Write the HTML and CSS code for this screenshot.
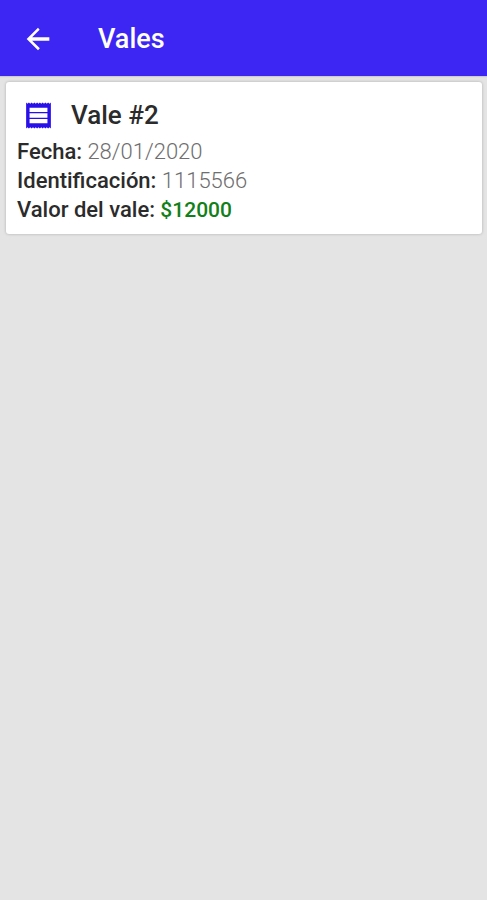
FILE: index.html
```
<!DOCTYPE html>
<html lang="es">
<head>
  <meta charset="UTF-8">
  <meta name="viewport" content="width=device-width, initial-scale=1">
  <title>Vales</title>
  <link rel="stylesheet" href="styles.css">
</head>
<body>
  <header class="toolbar">
    <button type="button" class="back" aria-label="Volver">
      <svg viewBox="0 0 24 24"><path d="M20 10.800H7.830l5.300-5.300L12 4l-8 8 8 8 1.300-1.500L7.830 13.200H20z"/></svg>
    </button>
    <h1>Vales</h1>
  </header>

  <main class="list">
    <article class="card">
      <div class="card-title">
        <svg class="receipt" viewBox="0 0 24 24"><path d="M18.500 17.700h-13v-3.200h13zm0-4.100h-13v-3.200h13zm0-4.100h-13V6.300h13zM3 21.500l1-1 1 1 1-1 1 1 1-1 1 1 1-1 1 1 1-1 1 1 1-1 1 1 1-1 1 1 1-1 1 1 1-1 1 1V2.500l-1 1-1-1-1 1-1-1-1 1-1-1-1 1-1-1-1 1-1-1-1 1-1-1-1 1-1-1-1 1-1-1-1 1-1-1z"/></svg>
        <h2>Vale #2</h2>
      </div>
      <p><strong>Fecha:</strong> 28/01/2020</p>
      <p><strong>Identificación:</strong> 1115566</p>
      <p><strong>Valor del vale:</strong> <span class="amount">$12000</span></p>
    </article>
  </main>
</body>
</html>
```
FILE: styles.css
```
body {
  margin: 0;
  min-height: 100vh;
  background: #e4e4e4;
  font-family: Roboto, sans-serif;
}

.toolbar {
  display: flex;
  align-items: center;
  box-sizing: border-box;
  height: 76px;
  padding: 2px 21px 0;
  background: #3d26f3;
  color: #fff;
  box-shadow: 0 1px 1px rgba(0, 0, 0, 0.1);
}

.back {
  display: flex;
  padding: 0;
  border: none;
  background: none;
  cursor: pointer;
}

.back svg {
  width: 34px;
  height: 34px;
  fill: #fff;
}

h1 {
  margin: 0 0 0 43px;
  font-size: 27px;
  font-weight: 500;
}

.list {
  padding: 6px 5px 6px 6px;
}

.card {
  padding: 15px 11px 9px;
  background: #fff;
  border-radius: 3px;
  box-shadow: 0 0 3px rgba(0, 0, 0, 0.25);
}

.card-title {
  display: flex;
  align-items: center;
  height: 36px;
  padding: 0 0 4px 5px;
}

.receipt {
  width: 33px;
  height: 33px;
  fill: #2a10e8;
}

h2 {
  margin: 0 0 0 16px;
  font-size: 26px;
  font-weight: 500;
  color: #2b2b2b;
}

p {
  margin: 0;
  font-size: 22px;
  font-weight: 300;
  line-height: 29px;
  color: #6e6e6e;
}

strong {
  font-weight: 500;
  color: #2b2b2b;
}

.amount {
  font-size: 21px;
  font-weight: 500;
  color: #128018;
}
```
